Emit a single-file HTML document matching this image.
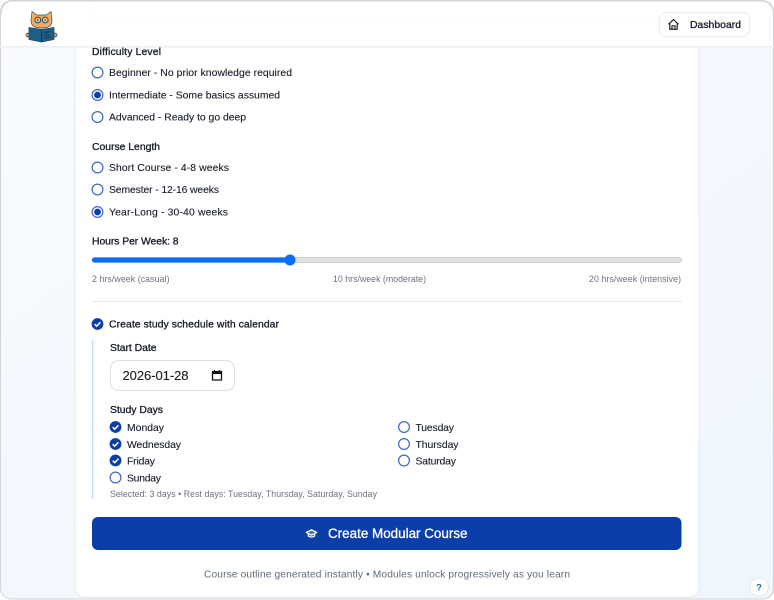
<!DOCTYPE html>
<html lang="en">
<head>
<meta charset="utf-8">
<title>Create Modular Course</title>
<style>
html,body{margin:0;padding:0;width:774px;height:600px;overflow:hidden;background:#fff}
svg{display:block}
text{font-family:"Liberation Sans",sans-serif;font-size:10.4px;fill:#151a26;stroke:#151a26;stroke-width:.1px}
.l{stroke:#151a26;stroke-width:.3px}
.s{font-size:8.800px;fill:#6b7280;stroke:none}
.o{fill:#fff;stroke:#3f68c8;stroke-width:1.200}
.f{fill:#0b3ea8}
</style>
</head>
<body>
<svg width="774" height="600" viewBox="0 0 774 600" xmlns="http://www.w3.org/2000/svg">
<defs>
<linearGradient id="bg" x1="0" y1="0" x2="1" y2="1">
<stop offset="0" stop-color="#f8fafe"/><stop offset="1" stop-color="#eff6fd"/>
</linearGradient>
<symbol id="chk" viewBox="0 0 11 11" overflow="visible">
<circle cx="5.500" cy="5.500" r="5.900" fill="#0b3ea8"/>
<path d="M2.700 5.700l2 2 3.700-3.900" fill="none" stroke="#fff" stroke-width="1.500"/>
</symbol>
</defs>

<!-- window -->
<rect x=".5" y=".5" width="773" height="598.500" rx="11" fill="url(#bg)" stroke="#d4d5d8"/>
<path d="M773.500 12v577a10 10 0 0 1-10 10H11" fill="none" stroke="#d0d1d4" stroke-width="1"/>

<!-- card -->
<rect x="75" y="30" width="624" height="567" rx="10" fill="#fff" stroke="#e4e8ef"/>

<!-- header -->
<path d="M1 47V12A11 11 0 0 1 12 1H762A11 11 0 0 1 773 12V47Z" fill="#fff"/>
<rect x="0" y="46" width="774" height="1.500" fill="#eceef1"/>
<path d="M90 1v10a11 11 0 0 0 11 11H660" fill="none" stroke="#fbfbfc" stroke-width="1.200"/>
<path d="M1.500 13A11 11 0 0 1 12 1H762A11 11 0 0 1 773 12" fill="none" stroke="#d4d5d8"/>

<!-- cat logo -->
<g stroke-linejoin="round">
<circle cx="27.800" cy="35" r="1.800" fill="#f5a85e" stroke="#1c4766" stroke-width=".8"/>
<circle cx="55.200" cy="35" r="1.800" fill="#f5a85e" stroke="#1c4766" stroke-width=".8"/>
<path d="M32 11.500L36.800 15h9.400l4.800-3.500L52 21Q52 28 41.500 28T31 21Z" fill="#f7a95c" stroke="#24506e" stroke-width=".7"/>
<circle cx="37.800" cy="20" r="2.900" fill="#fbc98c" stroke="#1c4766" stroke-width="1"/>
<circle cx="45.200" cy="20" r="2.900" fill="#fbc98c" stroke="#1c4766" stroke-width="1"/>
<circle cx="37.800" cy="20" r=".9" fill="#1c4766"/>
<circle cx="45.200" cy="20" r=".9" fill="#1c4766"/>
<path d="M29 27.500l12.500 2 12.500-2v12l-12.500 2.500-12.500-2.500z" fill="#1f5f85" stroke="#1c4766" stroke-width=".8"/>
<path d="M41.500 29.500v12" stroke="#143650" stroke-width="1"/>
<path d="M44.500 32.500l6-1M44.500 35.200l4.500-.7M44.500 38l6-1" stroke="#143650" stroke-width="1" fill="none"/>
</g>

<!-- dashboard button -->
<rect x="659.500" y="12.500" width="90" height="24" rx="7" fill="#fff" stroke="#e8eaee"/>
<path d="M668.500 24.300l5-4.800 5 4.800M669.800 23.300v6h7.400v-6M672 29.300v-3.500h3v3.500" fill="none" stroke="#1b1e25" stroke-width="1.200" stroke-linejoin="round"/>
<text class="l" x="690" y="28" textLength="51" lengthAdjust="spacing">Dashboard</text>

<!-- difficulty -->
<text class="l" x="92" y="55" textLength="69" lengthAdjust="spacing">Difficulty Level</text>
<circle class="o" cx="97.500" cy="72.500" r="5.400"/>
<text x="109" y="76" textLength="183" lengthAdjust="spacing">Beginner - No prior knowledge required</text>
<circle class="o" cx="97.500" cy="95" r="5.400"/><circle class="f" cx="97.500" cy="95" r="3.400"/>
<text x="109" y="98.500" textLength="171" lengthAdjust="spacing">Intermediate - Some basics assumed</text>
<circle class="o" cx="97.500" cy="117" r="5.400"/>
<text x="109" y="120.500" textLength="137" lengthAdjust="spacing">Advanced - Ready to go deep</text>

<!-- course length -->
<text class="l" x="92" y="150" textLength="68" lengthAdjust="spacing">Course Length</text>
<circle class="o" cx="97.500" cy="167.500" r="5.400"/>
<text x="109" y="171" textLength="120" lengthAdjust="spacing">Short Course - 4-8 weeks</text>
<circle class="o" cx="97.500" cy="189.500" r="5.400"/>
<text x="109" y="193" textLength="110" lengthAdjust="spacing">Semester - 12-16 weeks</text>
<circle class="o" cx="97.500" cy="212" r="5.400"/><circle class="f" cx="97.500" cy="212" r="3.400"/>
<text x="109" y="215.500" textLength="119" lengthAdjust="spacing">Year-Long - 30-40 weeks</text>

<!-- slider -->
<text class="l" x="92" y="244.500" textLength="86.500" lengthAdjust="spacing">Hours Per Week: 8</text>
<rect x="92" y="257.500" width="589.500" height="5" rx="2.500" fill="#e3e3e3" stroke="#c4c4c4" stroke-width=".7"/>
<rect x="92" y="257.500" width="198" height="5" rx="2.500" fill="#0b6ef5"/>
<circle cx="290" cy="260" r="5.500" fill="#0b6ef5"/>
<text class="s" x="92" y="282" textLength="77.500" lengthAdjust="spacing">2 hrs/week (casual)</text>
<text class="s" x="333" y="282" textLength="93" lengthAdjust="spacing">10 hrs/week (moderate)</text>
<text class="s" x="589" y="282" textLength="92" lengthAdjust="spacing">20 hrs/week (intensive)</text>
<rect x="92" y="301" width="590" height="1" fill="#e5e7eb"/>

<!-- schedule -->
<use href="#chk" x="92" y="318.500" width="11" height="11"/>
<text class="l" x="109" y="327.500" textLength="170" lengthAdjust="spacing">Create study schedule with calendar</text>
<rect x="92" y="340" width="1.200" height="159" fill="#bcdcfb"/>
<text class="l" x="110" y="351" textLength="46.500" lengthAdjust="spacing">Start Date</text>
<rect x="110.500" y="360.500" width="124" height="30" rx="8" fill="#fff" stroke="#dcdee8"/>
<text x="122.500" y="380" style="font-size:13px;fill:#1a1a1a" textLength="66" lengthAdjust="spacing">2026-01-28</text>
<path d="M212.500 371.500h9v8.500h-9z" fill="none" stroke="#111" stroke-width="1.300"/>
<rect x="212.500" y="371.500" width="9" height="2.500" fill="#111"/>
<path d="M214.500 370v1.500M219.500 370v1.500" stroke="#111" stroke-width="1"/>

<text class="l" x="110" y="413" textLength="53" lengthAdjust="spacing">Study Days</text>
<use href="#chk" x="110" y="421.500" width="11" height="11"/>
<text x="127" y="431" textLength="37" lengthAdjust="spacing">Monday</text>
<use href="#chk" x="110" y="438.500" width="11" height="11"/>
<text x="127" y="448" textLength="54" lengthAdjust="spacing">Wednesday</text>
<use href="#chk" x="110" y="455" width="11" height="11"/>
<text x="127" y="464.500" textLength="28" lengthAdjust="spacing">Friday</text>
<circle class="o" cx="115.500" cy="477.500" r="5.400"/>
<text x="127" y="481.500" textLength="34" lengthAdjust="spacing">Sunday</text>
<circle class="o" cx="404" cy="427" r="5.400"/>
<text x="415.500" y="431" textLength="38.500" lengthAdjust="spacing">Tuesday</text>
<circle class="o" cx="404" cy="444" r="5.400"/>
<text x="415.500" y="448" textLength="43" lengthAdjust="spacing">Thursday</text>
<circle class="o" cx="404" cy="460.500" r="5.400"/>
<text x="415.500" y="464.500" textLength="40.500" lengthAdjust="spacing">Saturday</text>
<text class="s" x="110" y="497" textLength="267" lengthAdjust="spacing">Selected: 3 days • Rest days: Tuesday, Thursday, Saturday, Sunday</text>

<!-- submit -->
<rect x="92" y="517" width="589.500" height="33" rx="6" fill="#0b3ea8"/>
<path d="M311.500 529.800l-5.300 2.600 5.300 2.600 5.300-2.600zM308.300 534v2c1.800 1.400 4.600 1.400 6.400 0v-2" fill="#fff" fill-opacity=".25" stroke="#fff" stroke-width="1.200" stroke-linejoin="round"/>
<text x="328" y="538" style="font-size:13.400px;fill:#fff;stroke:#fff;stroke-width:.3px" textLength="139.500" lengthAdjust="spacing">Create Modular Course</text>

<text x="204" y="577.500" style="font-size:10.200px;fill:#5f6b7d;stroke:none" textLength="366" lengthAdjust="spacing">Course outline generated instantly • Modules unlock progressively as you learn</text>

<!-- help -->
<circle cx="759" cy="587" r="9.300" fill="#fff" stroke="#e3e6ea"/>
<text x="759" y="590.500" text-anchor="middle" style="font-size:9.500px;font-weight:700;fill:#1d5fe0;stroke:none">?</text>
</svg>
</body>
</html>
